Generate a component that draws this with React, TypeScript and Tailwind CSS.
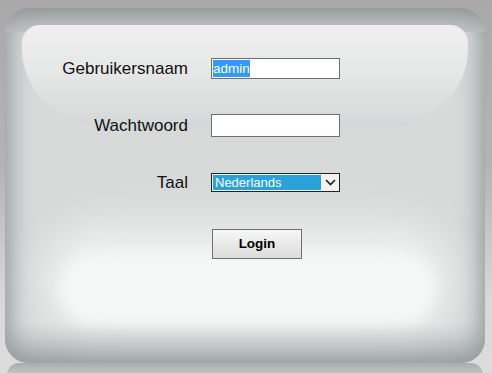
import type React from 'react';

/* ── Form primitives ── */

function Label({ children }: { children: React.ReactNode }) {
  return <div className="text-right text-[17px] leading-none text-[#111]">{children}</div>;
}

function TextBox({ children, className }: { children?: React.ReactNode; className?: string }) {
  return (
    <div
      className={`flex w-[129px] items-center border border-[#6f6f6f] bg-white px-[1px] text-[13.5px] leading-none ${className ?? ''}`}
    >
      {children}
    </div>
  );
}

function Chevron() {
  return (
    <svg width="11" height="7" viewBox="0 0 11 7" fill="none">
      <path d="M1 1 L5.5 5.5 L10 1" stroke="#1a1a1a" strokeWidth="1.6" />
    </svg>
  );
}

/* ── Glossy panel ── */

export default function App() {
  return (
    <div
      className="h-[373px] w-[492px] overflow-hidden bg-[linear-gradient(to_bottom,#a9a9a9_0%,#b4b4b4_45%,#d8d8d8_80%,#dcdcdc_100%)] pl-[5px] pt-[8px]"
      style={{ fontFamily: '"Liberation Sans", Arial, sans-serif' }}
    >
      <div className="relative h-[355px] w-[480px] overflow-hidden rounded-[24px] bg-[#d8dada] shadow-[inset_0_0_24px_4px_#8c9293]">
        {/* top edge shading */}
        <div className="pointer-events-none absolute inset-x-0 top-0 h-[24px] bg-[linear-gradient(to_bottom,#8f9495,#b9bdbd)] opacity-70" />
        {/* top gloss */}
        <div className="pointer-events-none absolute left-[17px] top-[17px] h-[104px] w-[446px] rounded-[18px_18px_90px_90px/18px_18px_80px_80px] bg-[linear-gradient(to_bottom,#efefef,#e6e7e7_45%,#d4d7d7)]" />
        {/* lower soft light */}
        <div className="pointer-events-none absolute left-[35px] top-[215px] h-[120px] w-[415px] rounded-[60px] bg-[#eceeee] blur-[18px]" />
        {/* bottom glow */}
        <div className="pointer-events-none absolute left-[55px] top-[244px] h-[72px] w-[375px] rounded-[36px] bg-[#f6f8f7] blur-[8px]" />
        {/* bottom edge shading */}
        <div className="pointer-events-none absolute inset-x-0 bottom-0 h-[40px] bg-[linear-gradient(to_bottom,rgba(200,204,204,0),rgba(150,156,157,0.6))]" />

        <div className="relative grid grid-cols-[183px_auto] items-center gap-x-[23px] pt-[50px]">
          <Label>Gebruikersnaam</Label>
          <TextBox className="h-[21px]">
            <span className="bg-[#3399ff] py-[1.5px] text-white">admin</span>
          </TextBox>

          <div className="col-span-2 h-[35px]" />

          <Label>Wachtwoord</Label>
          <TextBox className="h-[23px]" />

          <div className="col-span-2 h-[36px]" />

          <Label>Taal</Label>
          <div className="flex h-[19px] w-[129px] border border-[#222] bg-[#f2f2f2]">
            <div className="m-[1px] flex flex-1 items-center bg-[#29a1db] pl-[2px] text-[13px] leading-none text-white">
              Nederlands
            </div>
            <div className="flex w-[17px] items-center justify-center">
              <Chevron />
            </div>
          </div>

          <div className="col-span-2 h-[37px]" />

          <div />
          <button className="ml-[1px] flex h-[30px] w-[90px] items-center justify-center border border-[#707070] bg-[linear-gradient(to_bottom,#f7f7f7,#e9e9e9_50%,#dcdcdc)] text-[13.5px] font-bold text-black">
            Login
          </button>
        </div>
      </div>
      <div className="ml-[2px] h-[12px] w-[476px] rounded-t-[20px] bg-[linear-gradient(to_bottom,#a9adad,#c4c6c6)]" />
    </div>
  );
}
